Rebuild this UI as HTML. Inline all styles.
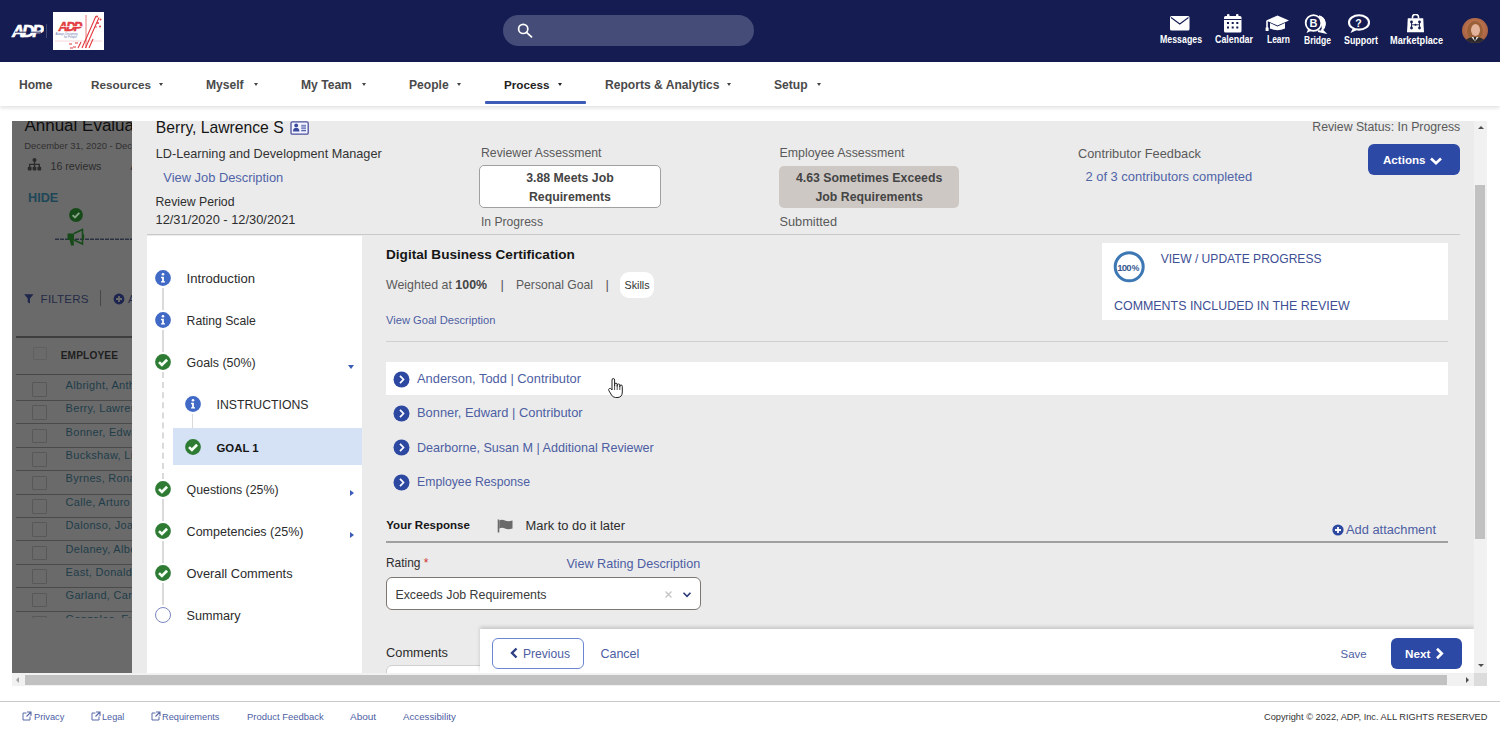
<!DOCTYPE html>
<html><head><meta charset="utf-8">
<style>
*{box-sizing:border-box;margin:0;padding:0}
html,body{width:1500px;height:732px;overflow:hidden;background:#fff;font-family:"Liberation Sans",sans-serif;position:relative}
.a{position:absolute}
.t{position:absolute;line-height:1;white-space:nowrap}
.b{font-weight:700}
#hdr{left:0;top:0;width:1500px;height:62px;background:#141c52}
#nav{left:0;top:62px;width:1500px;height:44px;background:#fff;box-shadow:0 2px 4px rgba(0,0,0,.12)}
.nv{color:#4a4a4a;font-weight:700;font-size:12.1px}
.car{position:absolute;width:0;height:0;border-left:2.5px solid transparent;border-right:2.5px solid transparent;border-top:3.5px solid #444}
.hl{color:#fff;font-weight:700;font-size:10px;transform-origin:0 0}
#dim{left:12px;top:121px;width:120px;height:552px;background:#6a6a6a;overflow:hidden}
#modal{left:132px;top:121px;width:1342px;height:552px;background:#ebebeb;overflow:hidden}
#lnav{left:15px;top:115px;width:215px;height:437px;background:#fff}
.lk{color:#4d5ea3}
.dk{color:#2a2a2a}
.gy{color:#555}
</style></head><body>

<!-- HEADER -->
<div id="hdr" class="a">
  <svg class="a" style="left:10px;top:20px" width="34" height="20" viewBox="0 0 34 20">
    <text x="2" y="17" font-family="Liberation Sans" font-weight="700" font-style="italic" font-size="17" fill="#fff" stroke="#fff" stroke-width="0.6" letter-spacing="-2.2">ADP</text>
    <path d="M5 12.2 L31 12.2" stroke="#141c52" stroke-width="0.9"/>
  </svg>
  <div class="a" style="left:45.5px;top:24px;width:1px;height:14px;background:#3e4672"></div>
  <div class="a" style="left:53px;top:12px;width:51px;height:38px;background:#fff">
    <svg class="a" style="left:0;top:0" width="51" height="38" viewBox="0 0 51 38">
      <text x="5.5" y="18.5" font-family="Liberation Sans" font-weight="700" font-style="italic" font-size="12.5" fill="#e23a3f" stroke="#e23a3f" stroke-width="0.5" letter-spacing="-1.4">ADP</text>
      <path d="M8 14.5 L29 14.5" stroke="#fff" stroke-width="0.7"/>
      <text x="2.5" y="22.5" font-family="Liberation Sans" font-size="2.8" fill="#6c7cae">Always Designing</text>
      <text x="11" y="25.8" font-family="Liberation Sans" font-size="2.8" fill="#6c7cae">for People</text>
      <path d="M2 29 L49 29" stroke="#efc0c0" stroke-width="0.6"/>
      <path d="M33 3 L33 36" stroke="#e23a3f" stroke-width="0.7"/>
      <path d="M29 36 L43 4 M32.5 36 L46 5.5 M36 36 L40 27 M25 36 L28 30" stroke="#e23a3f" stroke-width="1.1"/>
      <circle cx="44" cy="4.5" r="1" fill="#e23a3f"/><circle cx="47.5" cy="7.5" r="1" fill="#e23a3f"/><circle cx="45" cy="11" r="1" fill="#e23a3f"/><circle cx="47" cy="14.5" r="1" fill="#e23a3f"/><circle cx="43" cy="15" r="0.8" fill="#e23a3f"/>
      <path d="M16 32 L19 32 M20 35 L23 35 M17 36 L20 36 M22 31 L25 31" stroke="#e23a3f" stroke-width="1.1"/>
    </svg>
  </div>
  <div class="a" style="left:503px;top:15px;width:251px;height:31px;border-radius:16px;background:#454c78"></div>
  <svg class="a" style="left:514px;top:20px" width="22" height="22" viewBox="0 0 22 22">
    <circle cx="9.2" cy="8.9" r="4.6" fill="none" stroke="#fff" stroke-width="1.7"/>
    <path d="M12.5 12.3 L17.5 16.8" stroke="#fff" stroke-width="1.8" stroke-linecap="round"/>
  </svg>
  <!-- icons -->
  <svg class="a" style="left:1170px;top:16px" width="20" height="15" viewBox="0 0 20 15">
    <rect x="0" y="0" width="19.5" height="14.5" rx="1.5" fill="#fff"/>
    <path d="M1 1.5 L9.75 8 L18.5 1.5" fill="none" stroke="#141c52" stroke-width="1.1"/>
  </svg>
  <div class="t hl" style="left:1160px;top:35px;transform:scaleX(0.879)">Messages</div>
  <svg class="a" style="left:1224px;top:14px" width="18" height="19" viewBox="0 0 18 19">
    <rect x="0" y="2" width="17.5" height="16.5" rx="1.5" fill="#fff"/>
    <rect x="3" y="0" width="2.5" height="4" rx="1" fill="#fff"/><rect x="12" y="0" width="2.5" height="4" rx="1" fill="#fff"/>
    <rect x="0" y="5" width="17.5" height="1" fill="#141c52"/>
    <g fill="#141c52"><rect x="3" y="8" width="2" height="2"/><rect x="7.7" y="8" width="2" height="2"/><rect x="12.3" y="8" width="2" height="2"/><rect x="3" y="12.5" width="2" height="2"/><rect x="7.7" y="12.5" width="2" height="2"/><rect x="12.3" y="12.5" width="2" height="2"/></g>
  </svg>
  <div class="t hl" style="left:1215px;top:35px;transform:scaleX(0.888)">Calendar</div>
  <svg class="a" style="left:1265px;top:15px" width="25" height="17" viewBox="0 0 25 17">
    <path d="M12.5 0.5 L24 5.5 L12.5 10.5 L1 5.5 Z" fill="#fff"/>
    <path d="M5 8 L5 13.5 Q12.5 17 20 13.5 L20 8 L12.5 11.5 Z" fill="#fff"/>
    <path d="M2 6 L2 14" stroke="#fff" stroke-width="1.6"/><rect x="0.6" y="12.5" width="3" height="3.5" fill="#fff"/>
  </svg>
  <div class="t hl" style="left:1267px;top:35px;transform:scaleX(0.845)">Learn</div>
  <svg class="a" style="left:1304px;top:14px" width="24" height="20" viewBox="0 0 24 20">
    <path d="M15 2.2 A8 8 0 0 1 18 16 L20.5 18.5 L14 17" fill="none" stroke="#fff" stroke-width="1.8"/>
    <path d="M16 2 A8 8 0 0 1 21.5 9 A8 8 0 0 1 18 16 Z" fill="#fff"/>
    <circle cx="9.5" cy="9" r="7.8" fill="#141c52" stroke="#fff" stroke-width="1.8"/>
    <path d="M4.5 14.5 L2.5 19 L8 16.5" fill="#fff"/>
    <text x="5.6" y="13" font-family="Liberation Sans" font-weight="700" font-size="11" fill="#fff">B</text>
  </svg>
  <div class="t hl" style="left:1304px;top:36px;transform:scaleX(0.853)">Bridge</div>
  <svg class="a" style="left:1347px;top:14px" width="24" height="20" viewBox="0 0 24 20">
    <ellipse cx="12" cy="8.4" rx="10" ry="7.2" fill="none" stroke="#fff" stroke-width="2.1"/>
    <path d="M6 14 L3.5 19 L10.5 15.8" fill="#fff"/>
    <text x="8.2" y="12.6" font-family="Liberation Sans" font-weight="700" font-size="10.5" fill="#fff">?</text>
  </svg>
  <div class="t hl" style="left:1344px;top:36px;transform:scaleX(0.887)">Support</div>
  <svg class="a" style="left:1406px;top:14px" width="19" height="19" viewBox="0 0 19 19">
    <path d="M6.5 4.5 L6.5 3 A3 2.6 0 0 1 12.5 3 L12.5 4.5" fill="none" stroke="#fff" stroke-width="1.6"/>
    <path d="M1.8 4.2 L17.2 4.2 L18 18.3 L1 18.3 Z" fill="#fff"/>
    <path d="M5.5 8 L5.5 14 M13.5 8 L13.5 14 M5.5 10.8 L13.5 10.8" fill="none" stroke="#141c52" stroke-width="0.9"/>
    <g fill="#141c52"><circle cx="5.5" cy="8" r="1.4"/><circle cx="13.5" cy="8" r="1.4"/><circle cx="5.5" cy="14" r="1.4"/><circle cx="13.5" cy="14" r="1.4"/><circle cx="9.5" cy="10.8" r="1"/></g>
  </svg>
  <div class="t hl" style="left:1390px;top:36px;transform:scaleX(0.917)">Marketplace</div>
  <div class="a" style="left:1462px;top:17.5px;width:25.5px;height:25.5px;border-radius:50%;overflow:hidden;background:radial-gradient(circle at 50% 45%,#c98a6a 0,#b8704c 45%,#a35f42 75%,#7a4a3a 100%)">
    <div class="a" style="left:5px;top:3px;width:16px;height:20px;border-radius:50%;background:#9a6038"></div>
    <div class="a" style="left:8.5px;top:6px;width:9px;height:12px;border-radius:50%;background:#e3b39c"></div>
    <div class="a" style="left:3px;top:19px;width:20px;height:10px;border-radius:50% 50% 0 0;background:#2c2a2c"></div>
    <div class="a" style="left:9px;top:19px;width:8px;height:5px;background:#e8e0dc;clip-path:polygon(0 0,30% 0,50% 100%,70% 0,100% 0,50% 100%)"></div>
  </div>
  </div>
</div>

<!-- NAV -->
<div id="nav" class="a">
  <div class="t nv" style="left:19px;top:17px">Home</div>
  <div class="t nv" style="left:91px;top:17px;font-size:11.75px">Resources</div><div class="car" style="left:159px;top:21px"></div>
  <div class="t nv" style="left:206px;top:17px">Myself</div><div class="car" style="left:254px;top:21px"></div>
  <div class="t nv" style="left:301px;top:17px">My Team</div><div class="car" style="left:362px;top:21px"></div>
  <div class="t nv" style="left:409px;top:17px">People</div><div class="car" style="left:457px;top:21px"></div>
  <div class="t nv" style="left:504px;top:17px;color:#222;font-size:11.7px">Process</div><div class="car" style="left:558px;top:21px;border-top-color:#222"></div>
  <div class="a" style="left:485px;top:39px;width:101px;height:3px;background:#3d5cb8;border-radius:1px"></div>
  <div class="t nv" style="left:605px;top:17px">Reports &amp; Analytics</div><div class="car" style="left:727px;top:21px"></div>
  <div class="t nv" style="left:774px;top:17px">Setup</div><div class="car" style="left:817px;top:21px"></div>
</div>

<!-- DIM PAGE -->
<div id="dim" class="a">
<!--DIM-->
<div class="t" style="left:12.4px;top:-4.0px;font-size:17px;color:#0e0e0e">Annual Evaluation</div>
<div class="t" style="left:12.2px;top:20.0px;font-size:9.43px;color:#303030">December 31, 2020 - December 30, 2021</div>
<svg class="a" style="left:15px;top:37px" width="16" height="13" viewBox="0 0 16 13">
<g fill="#2b2b2b"><circle cx="7.5" cy="2" r="2"/><rect x="0.8" y="8.8" width="3.8" height="3.8" rx="1"/><rect x="5.6" y="8.8" width="3.8" height="3.8" rx="1"/><rect x="10.4" y="8.8" width="3.8" height="3.8" rx="1"/></g>
<path d="M7.5 3 V9 M2.7 9 V6.3 H12.3 V9" fill="none" stroke="#2b2b2b" stroke-width="1.3"/></svg>
<div class="t" style="left:38.5px;top:40.0px;font-size:10.67px;color:#2c2c2c">16 reviews</div>
<div class="t" style="left:118.5px;top:40.0px;font-size:10.67px;color:#2c2c2c">Annual</div>
<div class="t b" style="left:16.0px;top:71.0px;font-size:12.68px;color:#1e4757">HIDE</div>
<svg class="a" style="left:55.5px;top:85.80000000000001px" width="16" height="16" viewBox="0 0 16 16">
<circle cx="8" cy="8" r="6.9" fill="#164a19"/><path d="M4.6 8.1 L7 10.4 L11.3 5.9" fill="none" stroke="#86a486" stroke-width="2"/></svg>
<svg class="a" style="left:43px;top:117px" width="80" height="3" viewBox="0 0 80 3"><path d="M0 1.2 H80" stroke="#2a3140" stroke-width="1.5" stroke-dasharray="4 1"/></svg>
<svg class="a" style="left:54px;top:107px" width="21" height="19" viewBox="0 0 21 19">
<path d="M1.5 5.5 L8 5.5 L8 12 L1.5 12 Z" fill="#164a19"/>
<path d="M3.5 11.5 L5 17.5 L8 17.5 L7.5 11.5 Z" fill="#164a19"/>
<path d="M8 5.5 L16.5 1.5 L16.5 16 L8 12" fill="none" stroke="#164a19" stroke-width="1.5"/>
<path d="M16.5 6 Q18.5 8.8 16.5 11.5" fill="none" stroke="#164a19" stroke-width="1.6"/></svg>
<svg class="a" style="left:12px;top:173px" width="10" height="10" viewBox="0 0 10 10">
<path d="M0.2 0.3 L9.5 0.3 L6 4.6 L6 9.6 L3.7 8.2 L3.7 4.6 Z" fill="#1f274c"/></svg>
<div class="t" style="left:28.6px;top:172.0px;font-size:11.6px;color:#252b48;letter-spacing:.2px">FILTERS</div>
<div class="a" style="left:88.3px;top:169.0px;width:1.0px;height:16.0px;background:#474747"></div>
<svg class="a" style="left:100.5px;top:171.5px" width="12" height="12" viewBox="0 0 12 12">
<circle cx="6" cy="6" r="5.4" fill="#1c2450"/><path d="M6 3 V9 M3 6 H9" stroke="#6a6a6a" stroke-width="1.8"/></svg>
<div class="t" style="left:116.0px;top:172.0px;font-size:11.6px;color:#232a4c">ADD</div>
<div class="a" style="left:4.0px;top:215.3px;width:116.0px;height:1.5px;background:#3e3e3e"></div>
<div class="a" style="left:20.6px;top:225.5px;width:14.7px;height:13.8px;border:1px solid #606060;border-radius:1px"></div>
<div class="t b" style="left:48.7px;top:230.0px;font-size:10.13px;color:#1e1e1e;letter-spacing:.15px">EMPLOYEE</div>
<div class="a" style="left:4.0px;top:252.5px;width:116.0px;height:1.2px;background:#474747"></div>
<div class="a" style="left:0;top:254px;width:120px;height:242.7px;overflow:hidden"><div class="a" style="left:20.4px;top:7.0px;width:14.8px;height:14.5px;border:1px solid #585858;border-radius:1px"></div>
<div class="t" style="left:53.599999999999994px;top:5px;font-size:11px;color:#1f3d49;letter-spacing:.3px">Albright, Anthony</div>
<div class="a" style="left:4px;top:25.0px;width:120px;height:1px;background:#4a4a4a"></div>
<div class="a" style="left:20.4px;top:30.4px;width:14.8px;height:14.5px;border:1px solid #585858;border-radius:1px"></div>
<div class="t" style="left:53.599999999999994px;top:28px;font-size:11px;color:#1f3d49;letter-spacing:.3px">Berry, Lawrence</div>
<div class="a" style="left:4px;top:48.4px;width:120px;height:1px;background:#4a4a4a"></div>
<div class="a" style="left:20.4px;top:53.8px;width:14.8px;height:14.5px;border:1px solid #585858;border-radius:1px"></div>
<div class="t" style="left:53.599999999999994px;top:52px;font-size:11px;color:#1f3d49;letter-spacing:.3px">Bonner, Edward</div>
<div class="a" style="left:4px;top:71.8px;width:120px;height:1px;background:#4a4a4a"></div>
<div class="a" style="left:20.4px;top:77.2px;width:14.8px;height:14.5px;border:1px solid #585858;border-radius:1px"></div>
<div class="t" style="left:53.599999999999994px;top:75px;font-size:11px;color:#1f3d49;letter-spacing:.3px">Buckshaw, Lisa</div>
<div class="a" style="left:4px;top:95.2px;width:120px;height:1px;background:#4a4a4a"></div>
<div class="a" style="left:20.4px;top:100.6px;width:14.8px;height:14.5px;border:1px solid #585858;border-radius:1px"></div>
<div class="t" style="left:53.599999999999994px;top:98px;font-size:11px;color:#1f3d49;letter-spacing:.3px">Byrnes, Ronald</div>
<div class="a" style="left:4px;top:118.6px;width:120px;height:1px;background:#4a4a4a"></div>
<div class="a" style="left:20.4px;top:124.0px;width:14.8px;height:14.5px;border:1px solid #585858;border-radius:1px"></div>
<div class="t" style="left:53.599999999999994px;top:122px;font-size:11px;color:#1f3d49;letter-spacing:.3px">Calle, Arturo</div>
<div class="a" style="left:4px;top:142.0px;width:120px;height:1px;background:#4a4a4a"></div>
<div class="a" style="left:20.4px;top:147.4px;width:14.8px;height:14.5px;border:1px solid #585858;border-radius:1px"></div>
<div class="t" style="left:53.599999999999994px;top:145px;font-size:11px;color:#1f3d49;letter-spacing:.3px">Dalonso, Joan</div>
<div class="a" style="left:4px;top:165.4px;width:120px;height:1px;background:#4a4a4a"></div>
<div class="a" style="left:20.4px;top:170.8px;width:14.8px;height:14.5px;border:1px solid #585858;border-radius:1px"></div>
<div class="t" style="left:53.599999999999994px;top:169px;font-size:11px;color:#1f3d49;letter-spacing:.3px">Delaney, Albert</div>
<div class="a" style="left:4px;top:188.8px;width:120px;height:1px;background:#4a4a4a"></div>
<div class="a" style="left:20.4px;top:194.2px;width:14.8px;height:14.5px;border:1px solid #585858;border-radius:1px"></div>
<div class="t" style="left:53.599999999999994px;top:192px;font-size:11px;color:#1f3d49;letter-spacing:.3px">East, Donald</div>
<div class="a" style="left:4px;top:212.2px;width:120px;height:1px;background:#4a4a4a"></div>
<div class="a" style="left:20.4px;top:217.6px;width:14.8px;height:14.5px;border:1px solid #585858;border-radius:1px"></div>
<div class="t" style="left:53.599999999999994px;top:215px;font-size:11px;color:#1f3d49;letter-spacing:.3px">Garland, Carla</div>
<div class="a" style="left:4px;top:235.6px;width:120px;height:1px;background:#4a4a4a"></div>
<div class="a" style="left:20.4px;top:241.0px;width:14.8px;height:14.5px;border:1px solid #585858;border-radius:1px"></div>
<div class="t" style="left:53.599999999999994px;top:239px;font-size:11px;color:#1f3d49;letter-spacing:.3px">Gonzales, Eva</div>
<div class="a" style="left:4px;top:259.0px;width:120px;height:1px;background:#4a4a4a"></div></div>
<!--/DIM-->
</div>

<!-- MODAL -->
<div id="modal" class="a">
<!--M1-->
<div class="t" style="left:23.8px;top:-1.0px;font-size:15.7px;color:#161616">Berry, Lawrence S</div>
<svg class="a" style="left:158px;top:0px" width="19" height="14" viewBox="0 0 19 14">
<rect x="1" y="0.9" width="17.2" height="12.3" rx="1.3" fill="#f3f4ff" stroke="#4c519c" stroke-width="1.3"/>
<circle cx="6.2" cy="4.4" r="1.9" fill="#3a4b9e"/><path d="M3 10.5 Q3 6.8 6.2 6.8 Q9.4 6.8 9.4 10.5 Z" fill="#3a4b9e"/>
<path d="M11.2 4.8 H16 M11.2 7.2 H16" stroke="#7c88c4" stroke-width="2"/><path d="M11.2 9.7 H16" stroke="#3a4b9e" stroke-width="1.1"/></svg>
<div class="t" style="left:23.8px;top:27.0px;font-size:12.67px;color:#333">LD-Learning and Development Manager</div>
<div class="t" style="left:31.3px;top:51.0px;font-size:12.88px;color:#5064a8">View Job Description</div>
<div class="t" style="left:23.5px;top:75.0px;font-size:12.25px;color:#2e2e2e">Review Period</div>
<div class="t" style="left:23.5px;top:93.0px;font-size:12.85px;color:#2e2e2e">12/31/2020 - 12/30/2021</div>
<div class="t" style="left:349.0px;top:26.0px;font-size:12.25px;color:#5a5a5a">Reviewer Assessment</div>
<div class="a" style="left:347.3px;top:44.3px;width:181.3px;height:43.1px;background:#fff;border:1px solid #a0a0a0;border-radius:5px"></div>
<div class="a b" style="left:347.3px;width:181.3px;text-align:center;font-size:12.3px;line-height:19px;color:#444;top:48px">3.88 Meets Job<br>Requirements</div>
<div class="t" style="left:349.0px;top:95.0px;font-size:12.13px;color:#5a5a5a">In Progress</div>
<div class="t" style="left:647.5px;top:26.0px;font-size:12.36px;color:#5a5a5a">Employee Assessment</div>
<div class="a" style="left:647.3px;top:45.0px;width:179.7px;height:41.8px;background:#cdc8c4;border-radius:5px"></div>
<div class="a b" style="left:647.3px;width:179.7px;text-align:center;font-size:12.3px;line-height:19px;color:#444;top:48px">4.63 Sometimes Exceeds<br>Job Requirements</div>
<div class="t" style="left:647.5px;top:95.0px;font-size:12.77px;color:#5a5a5a">Submitted</div>
<div class="t" style="left:946.0px;top:27.0px;font-size:12.79px;color:#5a5a5a">Contributor Feedback</div>
<div class="t" style="left:953.4px;top:50.0px;font-size:12.95px;color:#5064a8">2 of 3 contributors completed</div>
<div class="t" style="left:1180.3px;top:0.0px;font-size:12.27px;color:#5a5a5a">Review Status: In Progress</div>
<div class="a" style="left:1236.2px;top:22.5px;width:91.8px;height:31.1px;background:#2d49a6;border-radius:6px"></div>
<div class="t b" style="left:1251.0px;top:33.0px;font-size:11.6px;color:#fff">Actions</div>
<svg class="a" style="left:1297px;top:35px" width="14" height="10" viewBox="0 0 14 10"><path d="M2 2.5 L7 7.3 L12 2.5" fill="none" stroke="#fff" stroke-width="2.6"/></svg>
<div class="a" style="left:15.0px;top:112.8px;width:1313.0px;height:1.5px;background:#c9c9c9"></div>
<div class="a" style="left:15.0px;top:115.0px;width:215.0px;height:437.0px;background:#fff"></div>
<div class="a" style="left:30.0px;top:167.0px;width:2.0px;height:22.0px;background:#dadada"></div>
<div class="a" style="left:30.0px;top:209.0px;width:2.0px;height:22.0px;background:#dadada"></div>
<div class="a" style="left:30px;top:251px;width:0;height:107px;border-left:2px dashed #dadada"></div>
<div class="a" style="left:59.8px;top:293.0px;width:1.6px;height:24.0px;background:#dadada"></div>
<div class="a" style="left:41.0px;top:307.0px;width:189.0px;height:36.5px;background:#d5e2f5"></div>
<div class="a" style="left:30.0px;top:378.0px;width:2.0px;height:22.0px;background:#dadada"></div>
<div class="a" style="left:30.0px;top:420.0px;width:2.0px;height:22.0px;background:#dadada"></div>
<div class="a" style="left:30.0px;top:462.0px;width:2.0px;height:22.0px;background:#dadada"></div>
<svg class="a" style="left:23.0px;top:149.0px" width="16" height="16" viewBox="0 0 16 16"><circle cx="8" cy="8" r="7.9" fill="#4169c6"/><circle cx="8" cy="4.3" r="1.3" fill="#fff"/><path d="M6 6.8 H8.9 V11.2 H10 V12.6 H6 V11.2 H7.1 V8.2 H6 Z" fill="#fff"/></svg>
<div class="t" style="left:54.6px;top:151.0px;font-size:13.1px;color:#2b2b2b">Introduction</div>
<svg class="a" style="left:23.0px;top:191.0px" width="16" height="16" viewBox="0 0 16 16"><circle cx="8" cy="8" r="7.9" fill="#4169c6"/><circle cx="8" cy="4.3" r="1.3" fill="#fff"/><path d="M6 6.8 H8.9 V11.2 H10 V12.6 H6 V11.2 H7.1 V8.2 H6 Z" fill="#fff"/></svg>
<div class="t" style="left:54.6px;top:194.0px;font-size:12.2px;color:#2b2b2b">Rating Scale</div>
<svg class="a" style="left:23.0px;top:233.0px" width="16" height="16" viewBox="0 0 16 16"><circle cx="8" cy="8" r="7.9" fill="#2e7b34"/><path d="M4 8.1 L6.9 10.9 L12.1 5.7" fill="none" stroke="#f4fff4" stroke-width="2.7"/></svg>
<div class="t" style="left:54.6px;top:236.0px;font-size:12.42px;color:#2b2b2b">Goals (50%)</div>
<div class="car" style="left:215.5px;top:243.5px;border-left-width:3.5px;border-right-width:3.5px;border-top:4px solid #3d5cb8"></div>
<svg class="a" style="left:52.6px;top:275.3px" width="16" height="16" viewBox="0 0 16 16"><circle cx="8" cy="8" r="7.9" fill="#4169c6"/><circle cx="8" cy="4.3" r="1.3" fill="#fff"/><path d="M6 6.8 H8.9 V11.2 H10 V12.6 H6 V11.2 H7.1 V8.2 H6 Z" fill="#fff"/></svg>
<div class="t" style="left:84.5px;top:278.0px;font-size:12.27px;color:#2b2b2b">INSTRUCTIONS</div>
<svg class="a" style="left:52.6px;top:317.6px" width="16" height="16" viewBox="0 0 16 16"><circle cx="8" cy="8" r="7.9" fill="#2e7b34"/><path d="M4 8.1 L6.9 10.9 L12.1 5.7" fill="none" stroke="#f4fff4" stroke-width="2.7"/></svg>
<div class="t b" style="left:84.5px;top:322.0px;font-size:11.4px;color:#161616">GOAL 1</div>
<svg class="a" style="left:23.0px;top:360.0px" width="16" height="16" viewBox="0 0 16 16"><circle cx="8" cy="8" r="7.9" fill="#2e7b34"/><path d="M4 8.1 L6.9 10.9 L12.1 5.7" fill="none" stroke="#f4fff4" stroke-width="2.7"/></svg>
<div class="t" style="left:54.6px;top:363.0px;font-size:12.35px;color:#2b2b2b">Questions (25%)</div>
<div class="a" style="left:217.5px;top:369.3px;width:0;height:0;border-top:3.2px solid transparent;border-bottom:3.2px solid transparent;border-left:4.5px solid #3d5cb8"></div>
<svg class="a" style="left:23.0px;top:402.0px" width="16" height="16" viewBox="0 0 16 16"><circle cx="8" cy="8" r="7.9" fill="#2e7b34"/><path d="M4 8.1 L6.9 10.9 L12.1 5.7" fill="none" stroke="#f4fff4" stroke-width="2.7"/></svg>
<div class="t" style="left:54.6px;top:405.0px;font-size:12.53px;color:#2b2b2b">Competencies (25%)</div>
<div class="a" style="left:217.5px;top:411.29999999999995px;width:0;height:0;border-top:3.2px solid transparent;border-bottom:3.2px solid transparent;border-left:4.5px solid #3d5cb8"></div>
<svg class="a" style="left:23.0px;top:444.4px" width="16" height="16" viewBox="0 0 16 16"><circle cx="8" cy="8" r="7.9" fill="#2e7b34"/><path d="M4 8.1 L6.9 10.9 L12.1 5.7" fill="none" stroke="#f4fff4" stroke-width="2.7"/></svg>
<div class="t" style="left:54.6px;top:447.0px;font-size:12.8px;color:#2b2b2b">Overall Comments</div>
<div class="a" style="left:23px;top:486.20000000000005px;width:16px;height:16px;border-radius:50%;border:1px solid #7a86c0;background:#fff"></div>
<div class="t" style="left:54.6px;top:489.0px;font-size:12.62px;color:#2b2b2b">Summary</div>
<!--/M1-->
<!--M2-->
<div class="t b" style="left:254.0px;top:127.0px;font-size:13.6px;color:#161616">Digital Business Certification</div>
<div class="t" style="left:254.0px;top:158.0px;font-size:12.4px;color:#5a5a5a">Weighted at <b style="color:#444">100%</b></div>
<div class="t" style="left:368.5px;top:157.0px;font-size:13px;color:#555">|</div>
<div class="t" style="left:384.0px;top:158.0px;font-size:12.15px;color:#5a5a5a">Personal Goal</div>
<div class="t" style="left:473.5px;top:157.0px;font-size:13px;color:#555">|</div>
<div class="a" style="left:488.0px;top:151.0px;width:34.0px;height:25.6px;background:#fff;border-radius:9px"></div>
<div class="t" style="left:492.6px;top:159.0px;font-size:10.7px;color:#333">Skills</div>
<div class="t" style="left:254.0px;top:194.0px;font-size:11.15px;color:#4d5ea3">View Goal Description</div>
<div class="a" style="left:254.0px;top:219.5px;width:1062.0px;height:1.0px;background:#d0d0d0"></div>
<div class="a" style="left:969.8px;top:122.3px;width:346.0px;height:76.7px;background:#fff"></div>
<svg class="a" style="left:981px;top:130px" width="32" height="32" viewBox="0 0 32 32"><circle cx="16.2" cy="15.8" r="14" fill="none" stroke="#3d78b5" stroke-width="3"/><text x="4.3" y="19.6" font-family="Liberation Sans" font-weight="700" font-size="9.6" fill="#3b5b92" letter-spacing="-0.9">100</text><text x="18.8" y="19.6" font-family="Liberation Sans" font-weight="700" font-size="8.6" fill="#3b5b92">%</text></svg>
<div class="t" style="left:1028.7px;top:132.0px;font-size:12.09px;color:#3e4f94">VIEW / UPDATE PROGRESS</div>
<div class="t" style="left:982.0px;top:179.0px;font-size:12.43px;color:#3e4f94">COMMENTS INCLUDED IN THE REVIEW</div>
<div class="a" style="left:253.6px;top:240.6px;width:1062.4px;height:33.8px;background:#fff"></div>
<svg class="a" style="left:260.8px;top:249.5px" width="17" height="17" viewBox="0 0 17 17"><circle cx="8.5" cy="8.5" r="8" fill="#2d48a0"/><path d="M7 4.8 L10.5 8.5 L7 12.2" fill="none" stroke="#fff" stroke-width="1.7"/></svg>
<div class="t" style="left:285.0px;top:252.0px;font-size:12.86px;color:#4d5ea3">Anderson, Todd | Contributor</div>
<svg class="a" style="left:260.8px;top:283.5px" width="17" height="17" viewBox="0 0 17 17"><circle cx="8.5" cy="8.5" r="8" fill="#2d48a0"/><path d="M7 4.8 L10.5 8.5 L7 12.2" fill="none" stroke="#fff" stroke-width="1.7"/></svg>
<div class="t" style="left:285.0px;top:286.0px;font-size:12.86px;color:#4d5ea3">Bonner, Edward | Contributor</div>
<svg class="a" style="left:260.8px;top:317.9px" width="17" height="17" viewBox="0 0 17 17"><circle cx="8.5" cy="8.5" r="8" fill="#2d48a0"/><path d="M7 4.8 L10.5 8.5 L7 12.2" fill="none" stroke="#fff" stroke-width="1.7"/></svg>
<div class="t" style="left:285.0px;top:321.0px;font-size:12.59px;color:#4d5ea3">Dearborne, Susan M | Additional Reviewer</div>
<svg class="a" style="left:260.8px;top:352.5px" width="17" height="17" viewBox="0 0 17 17"><circle cx="8.5" cy="8.5" r="8" fill="#2d48a0"/><path d="M7 4.8 L10.5 8.5 L7 12.2" fill="none" stroke="#fff" stroke-width="1.7"/></svg>
<div class="t" style="left:285.0px;top:355.0px;font-size:12.25px;color:#4d5ea3">Employee Response</div>
<svg class="a" style="left:475px;top:256px" width="18" height="22" viewBox="0 0 18 22">
<path d="M5 10 V3 Q5 1.5 6.3 1.5 Q7.6 1.5 7.6 3 V9 V7.5 Q7.6 6.2 8.9 6.2 Q10.2 6.2 10.2 7.5 V9.5 V8.3 Q10.2 7 11.5 7 Q12.8 7 12.8 8.3 V10 V9.2 Q12.8 8 14 8 Q15.3 8 15.3 9.3 V15 Q15.3 20 11 20.5 H8.5 Q6 20.5 4.5 18 L1.8 13.5 Q1.2 12.2 2.3 11.6 Q3.4 11 4.3 12 L5 13 Z" fill="#fff" stroke="#222" stroke-width="1"/>
<path d="M7.6 9 V13 M10.2 9.5 V13 M12.8 10 V13" stroke="#222" stroke-width="0.8"/></svg>
<div class="t b" style="left:254.3px;top:399.0px;font-size:11.5px;color:#161616">Your Response</div>
<svg class="a" style="left:365px;top:398px" width="17" height="14" viewBox="0 0 17 14"><path d="M1.5 0.5 V13.5" stroke="#6a6a6a" stroke-width="1.6"/><path d="M2.3 1.5 Q5 0 8 1.5 Q11 3 15.5 1.5 V9.5 Q11 11 8 9.5 Q5 8 2.3 9.5 Z" fill="#6a6a6a"/></svg>
<div class="t" style="left:393.6px;top:399.0px;font-size:12.88px;color:#2b2b2b">Mark to do it later</div>
<svg class="a" style="left:1200px;top:403px" width="12" height="12" viewBox="0 0 12 12"><circle cx="6" cy="6" r="5.6" fill="#2d48a0"/><path d="M6 3 V9 M3 6 H9" stroke="#fff" stroke-width="1.8"/></svg>
<div class="t" style="left:1214.0px;top:403.0px;font-size:12.85px;color:#4d5ea3">Add attachment</div>
<div class="a" style="left:254.0px;top:420.2px;width:1062.0px;height:1.6px;background:#a0a0a0"></div>
<div class="t" style="left:254.0px;top:437.0px;font-size:11.94px;color:#2b2b2b">Rating <span style="color:#d0312d">*</span></div>
<div class="t" style="left:434.4px;top:437.0px;font-size:12.64px;color:#4d5ea3">View Rating Description</div>
<div class="a" style="left:254.3px;top:456.0px;width:314.6px;height:33.2px;background:#fff;border:1.5px solid #7e7670;border-radius:6px"></div>
<div class="t" style="left:263.4px;top:468.0px;font-size:12.37px;color:#3a3a3a">Exceeds Job Requirements</div>
<svg class="a" style="left:532px;top:469px" width="9" height="9" viewBox="0 0 9 9"><path d="M1.5 1.5 L7.5 7.5 M7.5 1.5 L1.5 7.5" stroke="#c4c4c4" stroke-width="1.3"/></svg>
<svg class="a" style="left:550px;top:469px" width="10" height="9" viewBox="0 0 10 9"><path d="M1.5 2.8 L5 6.3 L8.5 2.8" fill="none" stroke="#2a3a78" stroke-width="1.6"/></svg>
<div class="t" style="left:254.0px;top:526.0px;font-size:12.82px;color:#2b2b2b">Comments</div>
<div class="a" style="left:254.0px;top:544.3px;width:314.0px;height:34.7px;background:#fff;border:1px solid #cfcfcf;border-radius:6px"></div>
<div class="a" style="left:348.0px;top:508.0px;width:994.0px;height:44.0px;background:#fff;box-shadow:0 -2px 4px rgba(0,0,0,.16)"></div>
<div class="a" style="left:360.0px;top:517.0px;width:92.4px;height:30.7px;border:1.5px solid #6b86d0;border-radius:6px"></div>
<svg class="a" style="left:377px;top:526px" width="10" height="12" viewBox="0 0 10 12"><path d="M7.5 1.5 L3 6 L7.5 10.5" fill="none" stroke="#2d3f85" stroke-width="2.4"/></svg>
<div class="t" style="left:391.0px;top:527.0px;font-size:12.08px;color:#4d5ea3">Previous</div>
<div class="t" style="left:468.4px;top:527.0px;font-size:12.53px;color:#4d5ea3">Cancel</div>
<div class="t" style="left:1208.6px;top:528.0px;font-size:11.41px;color:#4d5ea3">Save</div>
<div class="a" style="left:1258.6px;top:517.0px;width:71.4px;height:31.0px;background:#2d49a6;border-radius:6px"></div>
<div class="t b" style="left:1273.0px;top:527.0px;font-size:11.72px;color:#fff">Next</div>
<svg class="a" style="left:1302px;top:526px" width="11" height="13" viewBox="0 0 11 13"><path d="M3 1.8 L7.8 6.5 L3 11.2" fill="none" stroke="#fff" stroke-width="2.6"/></svg>
<!--/M2-->
</div>

<!--OUTER-->
<div class="a" style="left:1474.0px;top:121.0px;width:13.0px;height:552.0px;background:#f1f1f1"></div>
<div class="a" style="left:1477.5px;top:126px;width:0;height:0;border-left:3px solid transparent;border-right:3px solid transparent;border-bottom:3.5px solid #505050"></div>
<div class="a" style="left:1475.0px;top:185.0px;width:10.0px;height:354.3px;background:#c1c1c1"></div>
<div class="a" style="left:1477.5px;top:664px;width:0;height:0;border-left:3px solid transparent;border-right:3px solid transparent;border-top:3.5px solid #505050"></div>
<div class="a" style="left:12.0px;top:673.0px;width:1462.0px;height:13.0px;background:#f1f1f1"></div>
<div class="a" style="left:1474.0px;top:673.0px;width:13.0px;height:13.0px;background:#dcdcdc"></div>
<div class="a" style="left:16px;top:676.5px;width:0;height:0;border-top:3px solid transparent;border-bottom:3px solid transparent;border-right:3.5px solid #a3a3a3"></div>
<div class="a" style="left:25.0px;top:674.5px;width:1422.0px;height:10.0px;background:#c1c1c1"></div>
<div class="a" style="left:1466px;top:676.5px;width:0;height:0;border-top:3px solid transparent;border-bottom:3px solid transparent;border-left:3.5px solid #505050"></div>
<div class="a" style="left:0.0px;top:701.0px;width:1500.0px;height:1.2px;background:#c9c9c9"></div>
<svg class="a" style="left:22px;top:711px" width="10" height="10" viewBox="0 0 10 10"><path d="M4.5 2 H1 V9 H8 V5.5" fill="none" stroke="#5a6aa8" stroke-width="1"/><path d="M5 1 H9 V5 M9 1 L4.5 5.5" fill="none" stroke="#5a6aa8" stroke-width="1.1"/></svg>
<div class="t" style="left:33.6px;top:712px;font-size:9.9px;transform-origin:0 0;transform:scaleX(0.937);color:#4d5ea3">Privacy</div>
<svg class="a" style="left:90.5px;top:711px" width="10" height="10" viewBox="0 0 10 10"><path d="M4.5 2 H1 V9 H8 V5.5" fill="none" stroke="#5a6aa8" stroke-width="1"/><path d="M5 1 H9 V5 M9 1 L4.5 5.5" fill="none" stroke="#5a6aa8" stroke-width="1.1"/></svg>
<div class="t" style="left:101.6px;top:712px;font-size:9.9px;transform-origin:0 0;transform:scaleX(0.925);color:#4d5ea3">Legal</div>
<svg class="a" style="left:151px;top:711px" width="10" height="10" viewBox="0 0 10 10"><path d="M4.5 2 H1 V9 H8 V5.5" fill="none" stroke="#5a6aa8" stroke-width="1"/><path d="M5 1 H9 V5 M9 1 L4.5 5.5" fill="none" stroke="#5a6aa8" stroke-width="1.1"/></svg>
<div class="t" style="left:162.4px;top:712px;font-size:9.9px;transform-origin:0 0;transform:scaleX(0.935);color:#4d5ea3">Requirements</div>
<div class="t" style="left:247.0px;top:712px;font-size:9.9px;transform-origin:0 0;transform:scaleX(0.956);color:#4d5ea3">Product Feedback</div>
<div class="t" style="left:350.4px;top:712px;font-size:9.9px;transform-origin:0 0;transform:scaleX(1.013);color:#4d5ea3">About</div>
<div class="t" style="left:403.0px;top:712px;font-size:9.9px;transform-origin:0 0;transform:scaleX(0.983);color:#4d5ea3">Accessibility</div>
<div class="t" style="left:1264.0px;top:712px;font-size:9.9px;transform-origin:0 0;transform:scaleX(0.936);color:#333">Copyright © 2022, ADP, Inc. ALL RIGHTS RESERVED</div>
<!--/OUTER-->
</body></html>
